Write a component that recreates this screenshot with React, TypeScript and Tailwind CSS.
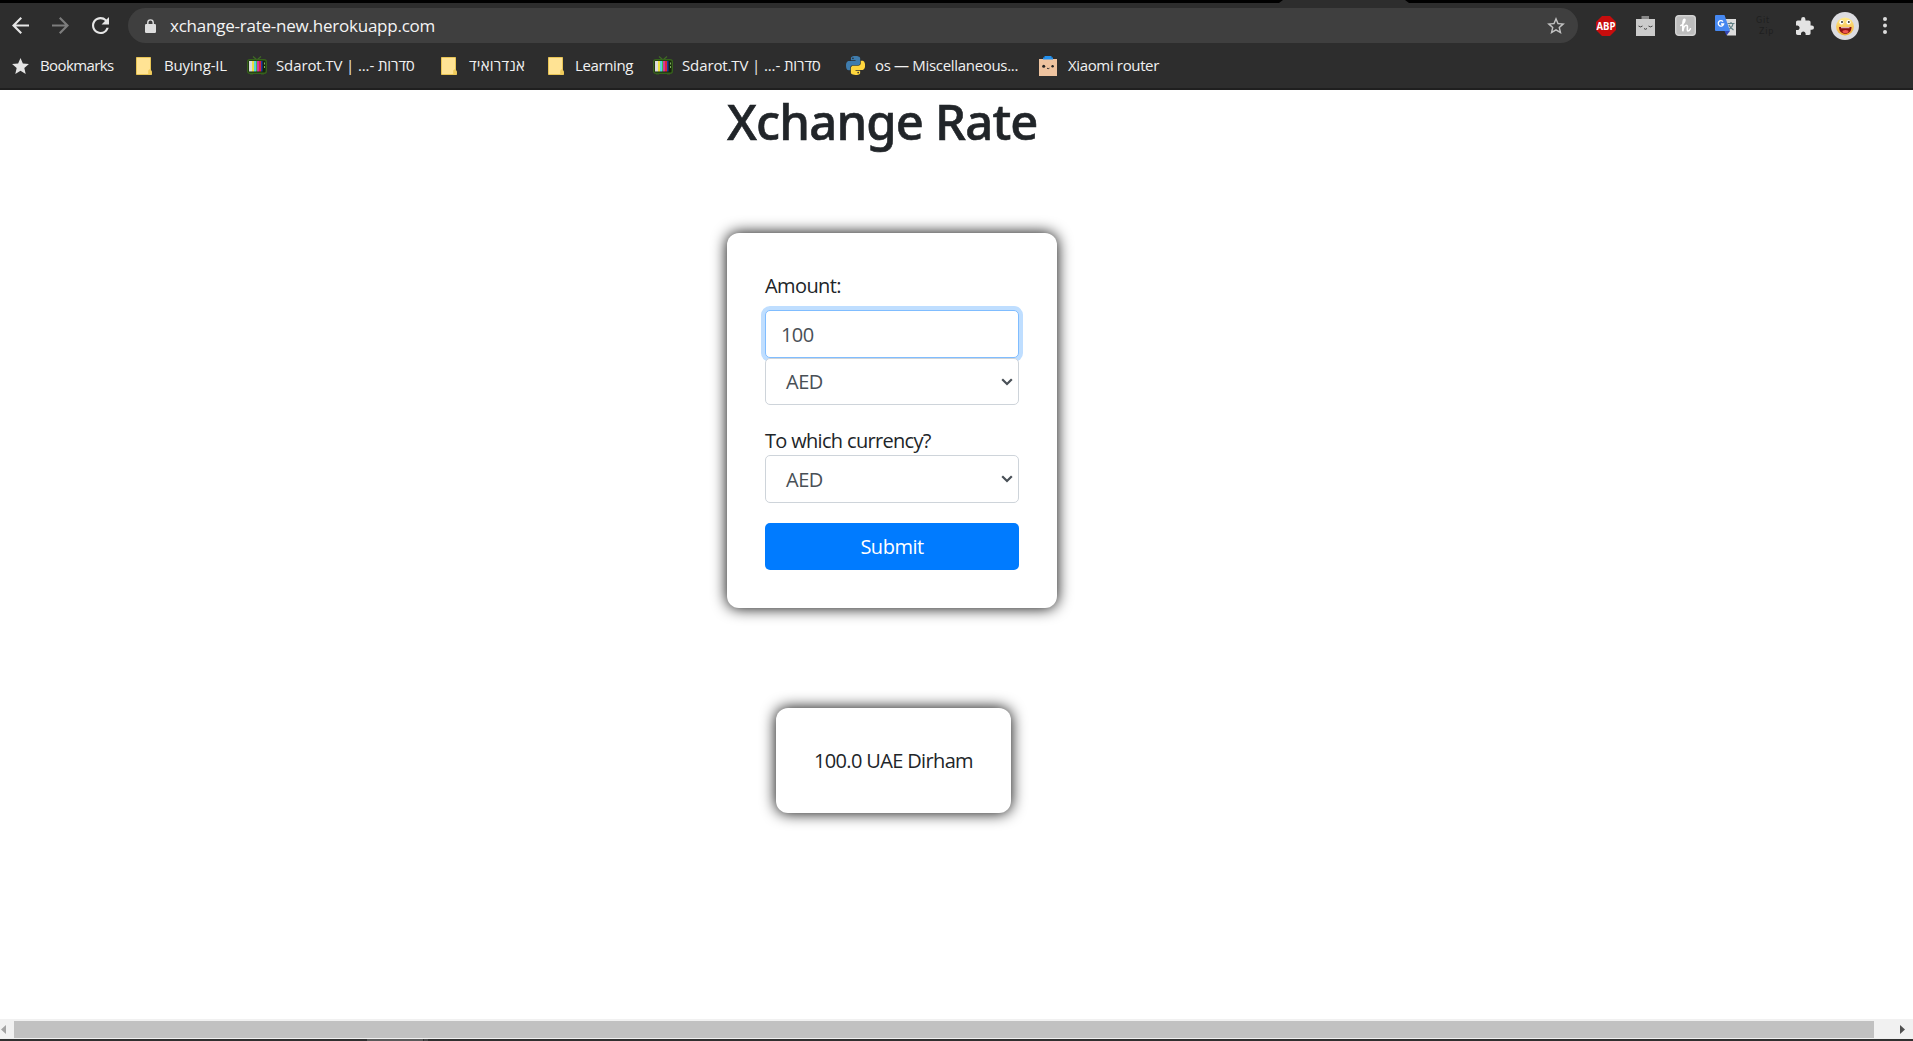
import type { ReactNode } from "react";

const material = "fill-current shrink-0";

function Back({ className = "" }: { className?: string }) {
  return (
    <svg viewBox="4 4 16 16" className={`${material} size-[17px] ${className}`}>
      <path d="M20 11H7.83l5.59-5.59L12 4l-8 8 8 8 1.41-1.41L7.83 13H20v-2z" />
    </svg>
  );
}

function Folder() {
  return (
    <svg viewBox="0 0 16 18" className="h-[18px] w-4 shrink-0">
      <path d="M.5.5h14v12.5l1 1.5v3H.5z" fill="#ffe394" stroke="#e8c455" />
      <path d="M12.2 17.5v-4l1.3-1.3h1v1.8l1 .8v2.7z" fill="#f0cb5c" />
    </svg>
  );
}

function Tv() {
  return (
    <svg viewBox="0 0 20 19" className="h-[19px] w-5 shrink-0">
      <path d="M6 .5 10 4l4-3.500" fill="none" stroke="#3f6b25" strokeWidth="1.200" />
      <rect x=".7" y="3.700" width="18.600" height="13.600" rx="2" fill="#15240d" stroke="#37621c" strokeWidth="1.400" />
      <path d="M3 17.500h3v1H3zM14 17.500h3v1h-3z" fill="#37621c" />
      <path d="M2 5h3v10.500H2z" fill="#dcdcdc" />
      <path d="M5 5h2v10.500H5z" fill="#e9e13f" />
      <path d="M7 5h2v10.500H7z" fill="#58cfe0" />
      <path d="M9 5h1v10.500H9z" fill="#3dba4f" />
      <path d="M10 5h2v10.500h-2z" fill="#d03aa0" />
      <path d="M12 5h2v10.500h-2z" fill="#e02438" />
      <path d="M14 5h1.500v10.500H14z" fill="#2536a0" />
      <path d="M17 6.500h1v2h-1zM17 10h1v2h-1z" fill="#7fae5f" />
    </svg>
  );
}

function Python() {
  return (
    <svg viewBox="0 0 110 110" className="size-[19px] shrink-0">
      <path
        fill="#3f7cad"
        d="M54.9 0C26.8 0 28.6 12.2 28.6 12.2v12.6h26.8v3.8H18S0 26.600 0 54.900s15.700 27.300 15.700 27.300h9.400V69s-.5-15.700 15.500-15.700h26.600s15 .2 15-14.500V14.500S84.500 0 54.900 0zM40.100 8.500a4.800 4.800 0 1 1 0 9.600 4.800 4.800 0 0 1 0-9.600z"
      />
      <path
        fill="#ffd63d"
        d="M55.600 109.800c28.100 0 26.300-12.200 26.300-12.200V85H55.100v-3.800h37.400s18 2 18-26.300-15.700-27.300-15.700-27.300h-9.400v13.200s.5 15.700-15.500 15.700H43.300s-15-.2-15 14.500v24.300s-2.300 14.500 27.300 14.500zm14.800-8.500a4.800 4.800 0 1 1 0-9.600 4.800 4.800 0 0 1 0 9.600z"
      />
    </svg>
  );
}

function Router() {
  return (
    <svg viewBox="0 0 18 20" className="h-5 w-[18px] shrink-0">
      <path d="M0 3h18v17H0z" fill="#eec39f" />
      <path d="M5.500 0h7v1.500H14V3.500H4V1.500h1.500z" fill="#2491ee" />
      <circle cx="4.700" cy="10.200" r="1.500" fill="#222" />
      <circle cx="13.600" cy="10.200" r="1.200" fill="#222" />
      <path d="M8 12.200q1.200 1 2.400 0" stroke="#333" fill="none" />
    </svg>
  );
}

function Bookmark({ icon, children, className }: { icon: ReactNode; children: ReactNode; className: string }) {
  return (
    <div className={`flex h-full shrink-0 items-center whitespace-nowrap ${className}`}>
      {icon}
      <span>{children}</span>
    </div>
  );
}

function Bookmarks() {
  return (
    <nav className="flex h-[45px] items-center bg-[#2d2d2d] pl-3 text-[15px] text-[#f1f1f1]">
      <Bookmark
        className="w-[124px] gap-[11px] tracking-[-0.6px]"
        icon={
          <svg viewBox="2 2 20 19" className="h-4 w-[17px] shrink-0 fill-[#e4e4e4]">
            <path d="M12 17.270 18.180 21l-1.640-7.030L22 9.240l-7.190-.61L12 2 9.190 8.630 2 9.240l5.460 4.730L5.820 21z" />
          </svg>
        }
      >
        Bookmarks
      </Bookmark>
      <Bookmark className="w-[111px] gap-[12px] tracking-[-0.15px]" icon={<Folder />}>Buying-IL</Bookmark>
      <Bookmark className="w-[194px] gap-[9px] tracking-[-0.12px]" icon={<Tv />}>Sdarot.TV | ...- סדרות</Bookmark>
      <Bookmark className="w-[107px] gap-[12px] tracking-[0.25px]" icon={<Folder />}>אנדרואיד</Bookmark>
      <Bookmark className="w-[105px] gap-[11px] tracking-[-0.38px]" icon={<Folder />}>Learning</Bookmark>
      <Bookmark className="w-[193px] gap-[9px] tracking-[-0.12px]" icon={<Tv />}>Sdarot.TV | ...- סדרות</Bookmark>
      <Bookmark className="w-[193px] gap-[10px] tracking-[-0.32px]" icon={<Python />}>os — Miscellaneous...</Bookmark>
      <Bookmark className="gap-[11px] tracking-[-0.36px]" icon={<Router />}>Xiaomi router</Bookmark>
    </nav>
  );
}

function Extensions() {
  return (
    <div className="flex items-center">
      <svg viewBox="0 0 20 20" className="ml-[18px] size-5">
        <path d="M6 0h8l6 6v8l-6 6H6l-6-6V6z" fill="#c70d0d" />
        <text x="10" y="14" textAnchor="middle" fontSize="10.500" fontWeight="700" fill="#fff" textLength="19" lengthAdjust="spacingAndGlyphs" className="font-['Open_Sans',sans-serif]">
          ABP
        </text>
      </svg>
      <svg viewBox="0 0 19 20" className="ml-5 h-5 w-[19px]">
        <path d="M0 3h19v17H0z" fill="#cbcbcb" />
        <path d="M5.500 0h7.500v3H5.500z" fill="#888" />
        <path d="M2.500 10q2 1.800 4 0M12.500 10q2 1.800 4 0M8 12.500q1.500 1.600 3 0" fill="none" stroke="#444" />
      </svg>
      <svg viewBox="0 0 21 21" className="ml-5 size-[21px]">
        <rect x=".7" y=".7" width="19.600" height="19.600" rx="3" fill="#bdbdbd" stroke="#d2d2d2" strokeWidth="1.400" />
        <path
          d="M5.800 10.500c3-1 5.200-6.200 3.600-6.200-1.700 0-1.700 6-1.600 12 .6-3.600 2.200-6 3.700-6 2 0-.2 5.700 1.600 5.700 1.100 0 1.800-1 2.300-2.200"
          fill="none"
          stroke="#fff"
          strokeWidth="1.600"
          strokeLinecap="round"
        />
      </svg>
      <svg viewBox="0 0 21 21" className="ml-[19px] size-[21px]">
        <path d="M8 4h13v16.500H12z" fill="#dcdcdc" />
        <path d="M12.500 8.500h7M16 7v1.500M18 8.500c-.5 3-2.500 5-4.500 6M14 10c1 2.500 3 4 4.500 5" stroke="#5e7f84" strokeWidth="1.200" fill="none" />
        <path d="M9.500 16H15l-3.500 4.500z" fill="#3446b4" />
        <path d="M1 0h8.500L15 16H1a1 1 0 0 1-1-1V1a1 1 0 0 1 1-1z" fill="#4688f1" />
        <path d="M8 6.600A2.700 2.700 0 1 0 8.600 9H6" fill="none" stroke="#fff" strokeWidth="1.300" />
      </svg>
      <div className="ml-[20px] w-[20px] text-[8px] leading-[11px] tracking-[0.8px] text-[#1f1f1f] font-['DejaVu_Sans',sans-serif]">
        <div>Git</div>
        <div className="pl-[3px]">Zip</div>
      </div>
      <svg viewBox="2 1 21 21" className="ml-[20px] size-[18px] fill-[#e3e3e3]">
        <path d="M20.500 11H19V7c0-1.100-.9-2-2-2h-4V3.500a2.500 2.500 0 0 0-5 0V5H4c-1.100 0-1.990.9-1.990 2v3.800H3.500c1.490 0 2.700 1.210 2.700 2.700s-1.210 2.700-2.700 2.700H2V20c0 1.100.9 2 2 2h3.800v-1.500c0-1.490 1.210-2.700 2.700-2.700s2.700 1.210 2.700 2.700V22H17c1.100 0 2-.9 2-2v-4h1.500a2.500 2.500 0 0 0 0-5z" />
      </svg>
      <svg viewBox="0 0 28 28" className="ml-[17px] size-7">
        <defs>
          <linearGradient id="face" x1="0" y1="0" x2="0" y2="1">
            <stop offset="0" stopColor="#ffeb8c" />
            <stop offset="1" stopColor="#f4ad35" />
          </linearGradient>
        </defs>
        <circle cx="14" cy="14" r="14" fill="#dcdce0" />
        <circle cx="14" cy="14.500" r="9" fill="url(#face)" />
        <ellipse cx="10.500" cy="10.300" rx="2.100" ry="2.300" fill="#fff" />
        <ellipse cx="17.500" cy="10.300" rx="2.100" ry="2.300" fill="#fff" />
        <circle cx="11" cy="10" r="1" fill="#333" />
        <circle cx="17.800" cy="10" r="1" fill="#333" />
        <path d="M8 15h12.500c0 4.500-2.700 6.800-6.200 6.800S8 19.500 8 15z" fill="#8d1014" />
        <path d="M10 15.200h8.500v1H10z" fill="#f4dcdc" />
        <ellipse cx="14.500" cy="19.500" rx="3" ry="1.500" fill="#ef5550" />
      </svg>
      <svg viewBox="0 0 4 17" className="ml-[24px] h-[17px] w-1 fill-[#dcdcdc]">
        <circle cx="2" cy="2" r="2" />
        <circle cx="2" cy="8.500" r="2" />
        <circle cx="2" cy="15" r="2" />
      </svg>
    </div>
  );
}

function Toolbar() {
  return (
    <div className="flex h-10 items-center bg-[#2d2d2d] pt-[5px] pl-3">
      <Back className="text-[#e6e6e6]" />
      <Back className="ml-[23px] rotate-180 text-[#7d7d7d]" />
      <svg viewBox="4 4 16 16" className="ml-[23px] size-[17px] fill-[#e6e6e6]">
        <path d="M17.650 6.350A7.958 7.958 0 0 0 12 4c-4.420 0-7.990 3.580-7.990 8s3.570 8 7.990 8c3.730 0 6.840-2.550 7.730-6h-2.080A5.990 5.990 0 0 1 12 18c-3.310 0-6-2.690-6-6s2.690-6 6-6c1.660 0 3.140.69 4.220 1.780L13 11h7V4l-2.350 2.350z" />
      </svg>
      <div className="ml-[19px] flex h-[35px] w-[1450px] shrink-0 items-center rounded-full bg-[#3f3f3f] pr-[13px] pl-[17px]">
        <svg viewBox="0 0 11 14" className="h-[14px] w-[11px]">
          <path d="M2.800 6V3.600a2.700 2.700 0 0 1 5.400 0V6" fill="none" stroke="#dedede" strokeWidth="1.400" />
          <rect y="5" width="11" height="9" rx="1.200" fill="#dedede" />
        </svg>
        <span className="ml-[14px] flex-1 text-[17px] tracking-[-0.23px] text-[#f4f4f4]">xchange-rate-new.herokuapp.com</span>
        <svg viewBox="2 2 20 19" className="h-[17px] w-[18px] fill-[#c2c2c2]">
          <path d="m22 9.240-7.190-.62L12 2 9.190 8.630 2 9.240l5.460 4.730L5.820 21 12 17.270 18.180 21l-1.630-7.030L22 9.240zM12 15.400l-3.760 2.270 1-4.280-3.320-2.880 4.380-.38L12 6.100l1.710 4.040 4.380.38-3.320 2.880 1 4.280L12 15.400z" />
        </svg>
      </div>
      <Extensions />
    </div>
  );
}

function CurrencySelect({ className }: { className: string }) {
  return (
    <div className={`flex w-full items-center justify-between rounded-[5px] border border-[#ced4da] bg-white pr-[5px] pl-5 text-[#495057] ${className}`}>
      <span className="pt-px tracking-[-0.5px]">AED</span>
      <svg viewBox="0 0 12 8" className="h-2 w-3">
        <path d="m1.200 1.200 4.800 4.800 4.800-4.800" fill="none" stroke="#495057" strokeWidth="2.200" />
      </svg>
    </div>
  );
}

export default function App() {
  return (
    <div className="flex h-[1041px] w-[1913px] flex-col overflow-hidden bg-white font-['Open_Sans',sans-serif]">
      <header className="shrink-0 border-b-2 border-[#1f1f1f]">
        <div className="h-[3px] bg-black pl-[1279px]">
          <svg viewBox="0 0 130 3" className="h-[3px] w-[130px]">
            <path d="M0 3 4 0h122l4 3z" fill="#2d2d2d" />
          </svg>
        </div>
        <Toolbar />
        <Bookmarks />
      </header>

      <main className="flex-1 pl-[727px] text-[20px] leading-[30px] text-[#212529]">
        <h1 className="pt-px text-[49px] leading-[60px] font-medium tracking-[-0.83px] whitespace-nowrap [-webkit-text-stroke:0.6px_#212529] font-['Noto_Sans',sans-serif]">
          Xchange Rate
        </h1>
        <form className="mt-[82px] h-[375px] w-[330px] rounded-[12px] px-[38px] pt-[38px] shadow-[0_0_15px_#000]">
          <label className="block tracking-[-0.6px]">Amount:</label>
          <div className="mt-[9px] flex h-12 items-center rounded-[5px] border border-[#80bdff] bg-white pt-px pl-[15px] tracking-[-0.6px] text-[#495057] shadow-[0_0_0_4px_#bfdeff]">
            100
          </div>
          <CurrencySelect className="relative h-[47px]" />
          <div className="mt-[21px] h-[29px] tracking-[-0.68px]">To which currency?</div>
          <CurrencySelect className="h-12" />
          <button type="button" className="mt-5 flex h-[47px] w-full items-center justify-center rounded-[5px] bg-[#007bff] tracking-[-0.5px] text-white">
            Submit
          </button>
        </form>
        <div className="mt-[100px] ml-[49px] flex h-[105px] w-[235px] items-center justify-center rounded-[12px] tracking-[-0.65px] whitespace-nowrap shadow-[0_0_15px_#000]">
          100.0 UAE Dirham
        </div>
      </main>

      <footer className="shrink-0">
        <div className="flex h-5 items-center bg-[#f1f1f1]">
          <svg viewBox="0 0 5 9" className="ml-px h-[9px] w-[5px] fill-[#a3a3a3]">
            <path d="M5 0v9L0 4.500z" />
          </svg>
          <div className="mt-px ml-2 h-[17px] w-[1860px] bg-[#c1c1c1]" />
          <svg viewBox="0 0 5 9" className="ml-[26px] h-[9px] w-[5px] fill-[#505050]">
            <path d="M0 0v9l5-4.500z" />
          </svg>
        </div>
        <div className="flex h-[2px] bg-[#303030] pl-[367px]">
          <div className="w-14 bg-[#5a5a5a]" />
          <div className="ml-px w-1 bg-[#484848]" />
        </div>
      </footer>
    </div>
  );
}
